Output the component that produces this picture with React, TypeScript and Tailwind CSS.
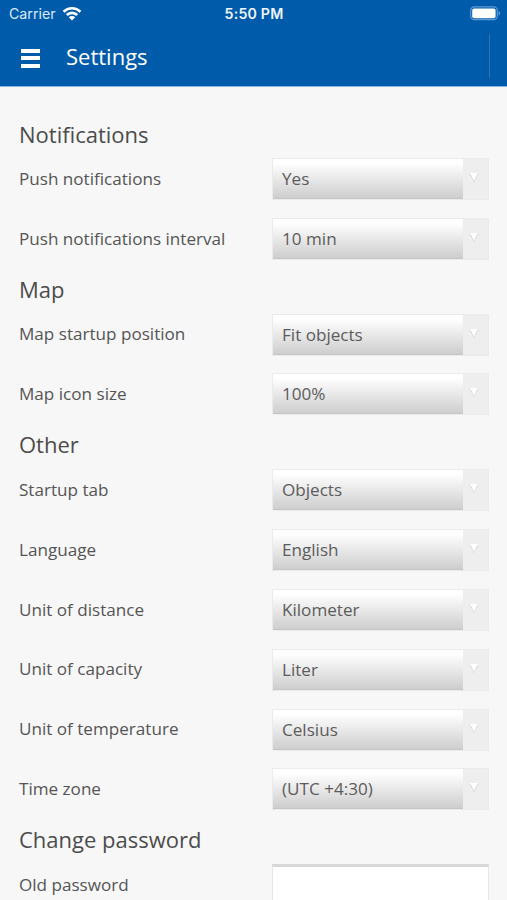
import React from "react";

type SettingProps = {
  label: string;
  value?: string;
};

const sections: { title: string; items: SettingProps[] }[] = [
  {
    title: "Notifications",
    items: [
      { label: "Push notifications", value: "Yes" },
      { label: "Push notifications interval", value: "10 min" },
    ],
  },
  {
    title: "Map",
    items: [
      { label: "Map startup position", value: "Fit objects" },
      { label: "Map icon size", value: "100%" },
    ],
  },
  {
    title: "Other",
    items: [
      { label: "Startup tab", value: "Objects" },
      { label: "Language", value: "English" },
      { label: "Unit of distance", value: "Kilometer" },
      { label: "Unit of capacity", value: "Liter" },
      { label: "Unit of temperature", value: "Celsius" },
      { label: "Time zone", value: "(UTC +4:30)" },
    ],
  },
  {
    title: "Change password",
    items: [{ label: "Old password" }],
  },
];

function StatusBar() {
  return (
    <div className="flex h-[26px] items-center justify-between pl-[9px] pr-[6px] font-['Inter',sans-serif] text-white">
      <div className="flex flex-1 items-center gap-1.5 text-[14.2px] text-[#d9ebfb]">
        <span>Carrier</span>
        <svg width="20" height="15" viewBox="0 0 20 15" fill="none" stroke="#fff" strokeWidth="2.7">
          <path d="M1.6 5.7a12 12 0 0 1 16.8 0" />
          <path d="M4.8 9a7.4 7.4 0 0 1 10.4 0" />
          <path d="M10 14.4 6.8 11.3a4.6 4.6 0 0 1 6.4 0Z" fill="#fff" stroke="none" />
        </svg>
      </div>
      <div className="mr-[2px] text-[14.2px] font-semibold tracking-[0.2px] text-[#eef6fd]">5:50 PM</div>
      <div className="flex flex-1 justify-end">
        <svg width="31" height="15" viewBox="0 0 31 15">
          <rect x="0.7" y="0.9" width="26.6" height="12.8" rx="3.6" fill="none" stroke="#5c9ad6" strokeWidth="1.2" />
          <rect x="2.2" y="2.4" width="23.4" height="9.8" rx="2" fill="#fff" />
          <path d="M28.6 5v4.6c2.2-.8 2.2-3.8 0-4.6Z" fill="#5c9ad6" />
        </svg>
      </div>
    </div>
  );
}

function Select({ value }: { value: string }) {
  return (
    <button className="flex h-[42px] w-[217px] border border-[#ebebeb] bg-[#eeeeee] text-left">
      <span className="flex h-full w-[190px] items-center border-b border-[#c6c6c6] bg-linear-to-b from-white from-10% to-[#cecece] pl-[9px] text-[#5c5c5c]">
        {value}
      </span>
      <svg className="ml-[6px] mt-[14px]" width="10" height="10" viewBox="0 0 10 10">
        <path d="M.5 1h9L5 9.5Z" fill="#dcdcdc" />
        <path d="M1.2 0h7.6L5 7.8Z" fill="#fff" />
      </svg>
    </button>
  );
}

function Setting({ label, value }: SettingProps) {
  return (
    <div className="flex h-[59.9px] items-center justify-between">
      <span className="pb-[1.5px]">{label}</span>
      {value ? (
        <Select value={value} />
      ) : (
        <input
          type="password"
          aria-label={label}
          className="h-[42px] w-[217px] border border-t-[3px] border-[#e6e6e6] border-t-[#d8d8d8] bg-white"
        />
      )}
    </div>
  );
}

export default function App() {
  return (
    <div className="h-[900px] overflow-hidden bg-[#f7f7f7] font-['Open_Sans',sans-serif] text-[17.1px] leading-[25px] text-[#555555]">
      <header className="h-[87px] border-b border-[#8bb8e2] bg-[#005bab]">
        <StatusBar />
        <div className="flex h-[59px] items-center pl-[21px] pr-[17px] text-white">
          <button aria-label="Menu" className="flex w-[19px] flex-col gap-[3.5px] pt-[5px]">
            <span className="h-1 bg-white" />
            <span className="h-1 bg-white" />
            <span className="h-1 bg-white" />
          </button>
          <h1 className="ml-[26px] pt-[2px] text-[22px]">Settings</h1>
          <div className="ml-auto h-11 w-px bg-[#3f6f9f]" />
        </div>
      </header>
      <main className="pl-[19px] pr-[18px] pt-[26.7px]">
        {sections.map((section) => (
          <section key={section.title}>
            <h2 className="h-[35.6px] pt-[5px] text-[22px] leading-[30px] text-[#4c4c4c]">
              {section.title}
            </h2>
            {section.items.map((item) => (
              <Setting key={item.label} {...item} />
            ))}
          </section>
        ))}
      </main>
    </div>
  );
}
